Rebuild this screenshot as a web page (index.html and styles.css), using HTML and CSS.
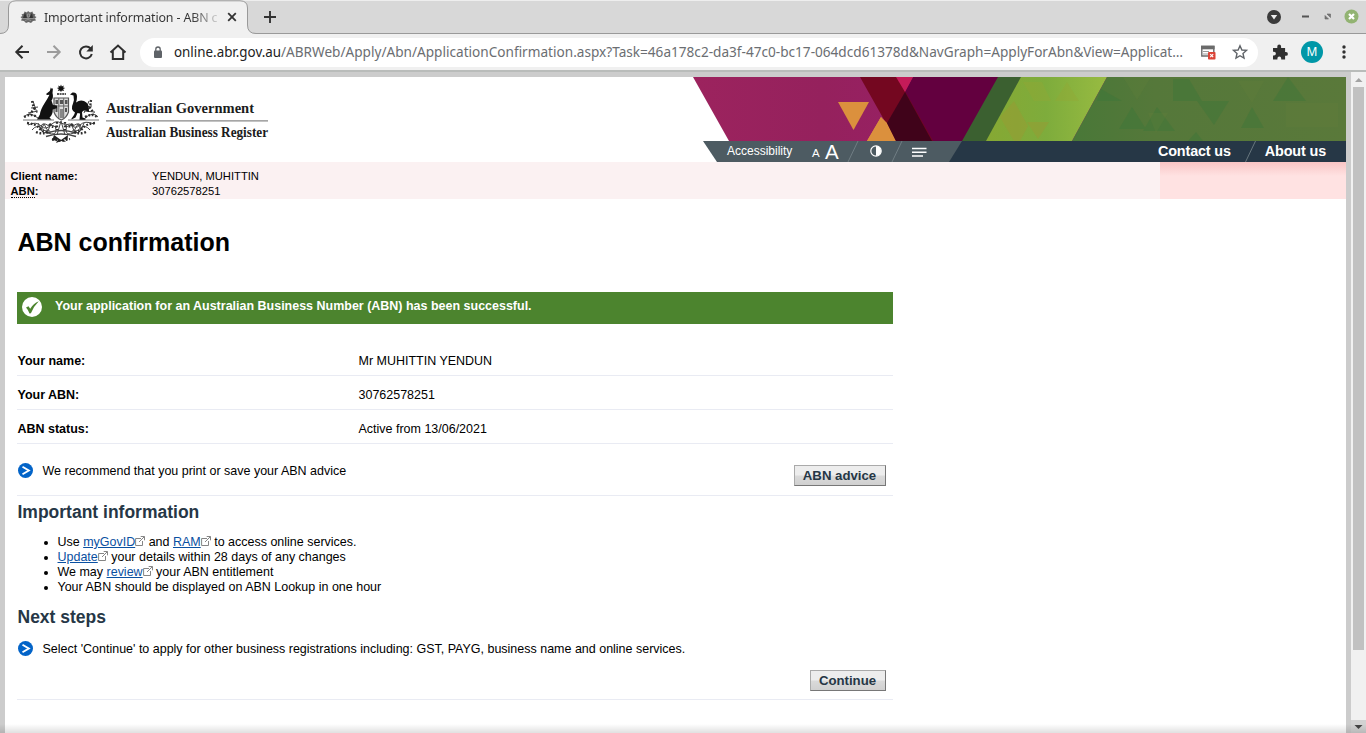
FILE: index.html
```html
<!DOCTYPE html>
<html lang="en">
<head>
<meta charset="utf-8">
<title>Important information - ABN confirmation</title>
<link rel="stylesheet" href="styles.css">
</head>
<body>
<svg width="0" height="0" class="defs">
  <symbol id="ext" viewBox="0 0 10 10"><path d="M6 2.500H.6v7h6.900V5M5.700.5h3.800v3.800M9.300.7L4 6" fill="none" stroke="#858585" stroke-width="1"/></symbol>
  <symbol id="go" viewBox="0 0 16 16"><circle cx="7.500" cy="7.500" r="7.500" fill="#0364c8"/><path d="M4.500 3.800L10.800 7.500l-6.300 3.700" fill="none" stroke="#fff" stroke-width="1.900"/></symbol>
  <symbol id="crest" viewBox="0 0 86 64">
    <g fill="none" stroke="#444" stroke-width="1">
      <path d="M5 38h31M50 38h31" stroke="#777"/>
      <path d="M10 43q8-4 13 1t11-2q4-4 9-1t9 1q5 6 10 1t14-1M14 48q5-6 9-2t8 3M72 48q-5-6-9-2t-8 3M20 41l3 7 3-6 4 7 3-8M66 41l-3 7-3-6-4 7-3-8"/>
      <path d="M31 44q-7-5-8 1t7 6q8 3 8-3t-7-4M55 44q7-5 8 1t-7 6q-8 3-8-3t7-4M43 39l-4 14M43 39l4 14"/>
      <path d="M15 19l4 12M13 26l7-1M10 31l10-2M71 19l-5 12M74 24l-8 1M77 30l-11-1M20 36q-9-7-14-1M67 36q8-7 13-1"/>
      <path d="M29 51q14-5 29 0M28 54.500q15-5 30 0" stroke-width="1.400"/>
    </g>
    <g fill="none" stroke="#2e2e2e" stroke-width="2.300" stroke-dasharray="1.800 1.700">
      <path d="M14 19l2 8-4 5M73 18l-1 8 4 5M6 35q7-4 13 0M67 35q7-4 12 0M9 41q9 1 12 5t9 4M77 41q-9 1-12 5t-9 4M18 50q7 3 14-1M68 50q-7 3-14-1M34 57l9 2 9-2M31 42q5 5 8 2M47 44q5 2 8-2M39 40v8M47 40v8"/>
    </g>
    <path d="M43 2.500l.8 2 2-1-.6 2 2 .6-2 1 .8 2-2.100-.6-.9 1.600-1-1.600-2.200.6 1-2-2-1 2-.6-.6-2 2 1z" fill="#111"/>
    <path d="M39 12h9" stroke="#222" stroke-width="1.300" stroke-dasharray="2 .6"/>
    <path d="M36 16h14.500v14q-2 6-7.200 8-5.300-2-7.300-8z" fill="#ddd" stroke="#555" stroke-width="1.200"/>
    <path d="M36 24h14M40.800 16v20M45.700 16v20" stroke="#666" fill="none"/>
    <path d="M37.500 18h2.500v4h-2.500zM42 18h3v4h-3zM47 18h2.500v4h-2.500zM37.500 26h2v4h-2zM47 26h2v4h-2z" fill="#555"/>
    <path d="M42 27h3v9h-3z" fill="#888"/>
    <path d="M32.800 5.500l-1 3.500-3.800 3 1 1 2.500-.3q-2.500 5-4.800 8.300-4.500 7-4.800 11.500L19 37.500h14.500l-2-2q3.500-3 3.300-8l4.700-1.500-.7-2.500-3.800-.5-1.500-4.500q2.300-3 1-7.500l.5-5-1 1z" fill="#111"/>
    <path d="M52 12.500l2.500-2q4.500-.5 4.500 4 0 3.500-1 6 4-3.200 8-1.500 5.500 2 5 11l-4.500-2-2.500 2 .5 5.500 3 1v1.200h-6l.6-6.200-2.600-.5-2 4.500-4 2v-1l2.500-3.500 1-2.500q-5-3-2-9 1.500-4 .5-8z" fill="#111"/>
    <path d="M36 53l7 5 7-5-.5 5-4.500-1 3 3-5-1-5 2 2-3.500-6 1.500z" fill="#222"/>
  </symbol>
</svg>

<div class="browser">
  <div class="tabstrip">
    <svg class="tabshape" width="260" height="34" viewBox="0 0 260 34"><path d="M0 33.500Q8.500 33.500 8.500 25V8Q8.500.8 16 .8h224q7.500 0 7.500 7.200v17q0 8.500 8 8.500h5v1H0z" fill="#f0f0f0"/><path d="M0 33.500Q8.500 33.500 8.500 25V8Q8.500.8 16 .8h224q7.500 0 7.500 7.200v17q0 8.500 8.500 8.500h4" fill="none" stroke="#999"/></svg>
    <div class="tab">
      <svg width="17" height="13" viewBox="0 0 17 13"><path d="M8 0l2 1.500 2.500-1 .5 2 2.500 1-1 1.500L16.500 6l-1.500 1.500 1 2-3 .5-2 2-2.500-1-2.500 1-2-2-3-.5 1-2L.5 6 2.500 5l-1-1.500L4 2.500l.5-2L7 1.500z" fill="#666"/><path d="M5 1.500L3 7h4zM12 2l1 5H9z" fill="#333"/><path d="M7.500 3h2v3h-2zM2 7.500h13M5 9.500l3-1 3 1" fill="none" stroke="#999" stroke-width=".8"/></svg>
      <span class="tabtitle">Important information - ABN c</span>
      <svg class="close" width="10" height="10" viewBox="0 0 10 10"><path d="M1.200 1.200l7.600 7.600M8.800 1.200L1.200 8.800" stroke="#333" stroke-width="1.800"/></svg>
    </div>
    <svg class="plus" width="12" height="12" viewBox="0 0 12 12"><path d="M6 0v12M0 6h12" stroke="#333" stroke-width="1.900"/></svg>
    <svg class="winctl" width="96" height="16" viewBox="0 0 96 16">
      <circle cx="8" cy="8" r="7" fill="#3b3b3b"/><path d="M4.800 6h6.400L8 10.500z" fill="#eee"/>
      <path d="M36 7.500h7" stroke="#555" stroke-width="2"/>
      <path d="M61 5h3.500v3.500zM59 6.500V10h3.500z" fill="#777" stroke="#666" stroke-width=".6"/>
      <circle cx="85.500" cy="7.500" r="7" fill="#92b372"/><path d="M83 5l5 5M88 5l-5 5" stroke="#fff" stroke-width="2.200"/>
    </svg>
  </div>
  <div class="toolbar">
    <svg class="navicons" width="114" height="20" viewBox="0 0 114 20" fill="none" stroke-width="2">
      <path d="M15 10H2.500M8.500 3.800L2.300 10l6.200 6.200" stroke="#2e2e2e"/>
      <path d="M33 10h12.500M39.500 3.800l6.200 6.200-6.200 6.200" stroke="#9c9c9c"/>
      <path d="M76.600 6.500A6 6 0 1 0 77.800 12" stroke="#2e2e2e"/><path d="M78.800 3v6.500h-6.500z" fill="#2e2e2e"/>
      <path d="M96.500 10.500L104 3.500l7.500 7M98.800 9v8h10.400V9" stroke="#2e2e2e"/>
    </svg>
    <div class="urlbar">
      <svg class="lock" width="10" height="13" viewBox="0 0 10 13"><rect x="1" y="4.500" width="8" height="7.500" rx="1" fill="#5f6368"/><path d="M2.800 5V3.200a2.200 2.200 0 0 1 4.400 0V5" fill="none" stroke="#5f6368" stroke-width="1.300"/></svg>
      <svg class="url" width="1014" height="26"><text x="0" y="18"><tspan class="host" textLength="107" lengthAdjust="spacingAndGlyphs">online.abr.gov.au</tspan><tspan x="107" textLength="902" lengthAdjust="spacingAndGlyphs">/ABRWeb/Apply/Abn/ApplicationConfirmation.aspx?Task=46a178c2-da3f-47c0-bc17-064dcd61378d&amp;NavGraph=ApplyForAbn&amp;View=Applicat…</tspan></text></svg>
      <svg class="urlicons" width="50" height="18" viewBox="0 0 50 18">
        <path d="M1.800 3.500h12v9.500h-12z" fill="none" stroke="#6b6b6b" stroke-width="1.400"/><path d="M1 2.700h13.600v3.600H1z" fill="#6b6b6b"/><path d="M3 8.500h6M3 11h5" stroke="#999"/>
        <rect x="8" y="9" width="7.500" height="7.500" rx=".8" fill="#db4437"/><path d="M10.200 11.200l3 3M13.200 11.200l-3 3" stroke="#fff" stroke-width="1.200"/>
        <path d="M40 2.700l1.900 4.300 4.600.4-3.500 3.100 1 4.600-4-2.400-4 2.400 1-4.600-3.500-3.100 4.600-.4z" fill="none" stroke="#5f6368" stroke-width="1.400"/>
      </svg>
    </div>
    <svg class="puzzle" width="16" height="16" viewBox="0 0 16 16"><path d="M1 4h4.300V2.500a1.900 1.900 0 0 1 3.800 0V4h4v4H14a1.900 1.900 0 0 1 0 3.800h-.9V15.500H9.200v-1a1.900 1.900 0 0 0-3.800 0v1H1v-4h1a1.900 1.900 0 0 0 0-3.800H1z" fill="#303030"/></svg>
    <span class="avatar">M</span>
    <svg class="dots" width="4" height="16" viewBox="0 0 4 16" fill="#303030"><circle cx="2" cy="3" r="1.700"/><circle cx="2" cy="8" r="1.700"/><circle cx="2" cy="13" r="1.700"/></svg>
  </div>
</div>

<div class="viewport">
  <div class="page">
    <header class="head">
      <div class="brand">
        <svg width="270" height="85" viewBox="0 0 270 85">
          <use href="#crest" x="13" y="5" width="86" height="64"/>
          <text x="101" y="36" textLength="148" lengthAdjust="spacingAndGlyphs">Australian Government</text>
          <path d="M101 43.800h162" stroke="#888" stroke-width="1.300"/>
          <text x="101" y="60" textLength="162" lengthAdjust="spacingAndGlyphs">Australian Business Register</text>
        </svg>
      </div>
      <div class="banner">
        <svg class="art" width="654" height="64" viewBox="-1 0 654 64">
          <defs>
            <linearGradient id="mag"><stop offset="0" stop-color="#9c235e"/><stop offset=".2" stop-color="#95215d"/><stop offset=".35" stop-color="#982065"/></linearGradient>
            <linearGradient id="lime"><stop offset="0" stop-color="#86a833"/><stop offset=".5" stop-color="#7eac3c"/><stop offset="1" stop-color="#98bb41"/></linearGradient>
            <linearGradient id="grn"><stop offset="0" stop-color="#497838"/><stop offset=".3" stop-color="#55783a"/><stop offset="1" stop-color="#5a793a"/></linearGradient>
          </defs>
          <path d="M0 0h654v64H36z" fill="url(#mag)"/>
          <path d="M220 0h95l-36 64h-95z" fill="#63003f"/>
          <path d="M174 64l14-24 14 24z" fill="#db903d"/>
          <path d="M167 0h37l36 64h-37z" fill="#740720"/>
          <path d="M188 40l6 6 9 18h-29z" fill="#db903d"/>
          <path d="M203 0h17l-8 15z" fill="#c41b59"/>
          <path d="M212 15l27 49h-36l-9-18z" fill="#40031a"/>
          <path d="M145 25h31l-15.500 28z" fill="#db903d"/>
          <path d="M305 0h26l-36 64h-26z" fill="#3b6030"/>
          <path d="M328 0h86l-35 64h-86z" fill="url(#lime)"/>
          <path d="M321 24l14 25-8 15h-6l-14-24zM334 45h22l-11 17z" fill="#9b9932" opacity=".45"/>
          <path d="M330 5h19l9 19h-17zM374 5l12 19h-24z" fill="#95a735" opacity=".35"/>
          <path d="M414 0h240v64H379z" fill="url(#grn)"/>
          <path d="M439 30l14 22h-27zM464 30l18 24h-32zM504 24h32l-15 24zM595 0l18 24h-33zM480 2h16l13 22h-29zM408 12l21 12h-25zM559 30l12 21h-23zM503 55l7 9h-15z" fill="#397639" opacity=".4"/>
          <path d="M430 0h28l-14 23zM545 4h26l-12 22zM593 26h52v24h-52zM455 36h20l-12 20z" fill="#6b803e" opacity=".2"/>
        </svg>
        <nav class="nav">
          <svg class="navbg" width="643" height="21" viewBox="0 0 643 21"><path d="M0 0h643v21H14z" fill="#4d5b62"/><path d="M259 0h385v21H246z" fill="#263746"/><path d="M155 0l-10 21M199 0l-10 21M552.500 0l-10 21" stroke="#79868c" stroke-width=".8"/></svg>
          <span class="access">Accessibility</span>
          <span class="small-a">A</span><span class="big-a">A</span>
          <svg class="contrast" width="12" height="12" viewBox="0 0 12 12"><circle cx="6" cy="6" r="5.200" fill="none" stroke="#fff" stroke-width="1.200"/><path d="M6 1a5 5 0 0 1 0 10z" fill="#fff"/></svg>
          <svg class="lines" width="15" height="10" viewBox="0 0 15 10"><path d="M0 1.500h14.500M0 5.200h14.500M0 9h11" stroke="#fff" stroke-width="1.500"/></svg>
          <span class="contact">Contact us</span><span class="about">About us</span>
        </nav>
      </div>
    </header>

    <section class="client">
      <dl><dt>Client name:</dt><dd>YENDUN, MUHITTIN</dd><dt><abbr>ABN</abbr>:</dt><dd>30762578251</dd></dl>
      <div class="pink"></div>
    </section>

    <main class="main">
      <h1>ABN confirmation</h1>
      <div class="success">
        <svg width="20" height="20" viewBox="0 0 20 20"><circle cx="10" cy="10" r="10" fill="#fff"/><path d="M4 10.500l2.500-1.300 1.700 2.600Q11.300 6.500 16.800 4.300 11.500 9.500 8.900 16.300l-1.400.2Q6.400 13 4 10.500z" fill="#4c842e"/></svg>
        <b>Your application for an Australian Business Number (ABN) has been successful.</b>
      </div>
      <dl class="details">
        <div><dt>Your name:</dt><dd>Mr MUHITTIN YENDUN</dd></div>
        <div><dt>Your ABN:</dt><dd>30762578251</dd></div>
        <div><dt>ABN status:</dt><dd>Active from 13/06/2021</dd></div>
      </dl>
      <div class="advice">
        <p class="action"><svg width="16" height="16"><use href="#go"/></svg><span>We recommend that you print or save your ABN advice</span></p>
        <button class="btn w92">ABN advice</button>
      </div>
      <h2>Important information</h2>
      <ul>
        <li>Use <a>myGovID</a><svg class="ext" width="10" height="10"><use href="#ext"/></svg> and <a>RAM</a><svg class="ext" width="10" height="10"><use href="#ext"/></svg> to access online services.</li>
        <li><a>Update</a><svg class="ext" width="10" height="10"><use href="#ext"/></svg> your details within 28 days of any changes</li>
        <li>We may <a>review</a><svg class="ext" width="10" height="10"><use href="#ext"/></svg> your ABN entitlement</li>
        <li>Your ABN should be displayed on ABN Lookup in one hour</li>
      </ul>
      <h2 class="next">Next steps</h2>
      <div class="steps">
        <p class="action"><svg width="16" height="16"><use href="#go"/></svg><span>Select 'Continue' to apply for other business registrations including: GST, PAYG, business name and online services.</span></p>
        <button class="btn w76">Continue</button>
      </div>
    </main>
  </div>
  <div class="scroll">
    <svg width="15" height="15" viewBox="0 0 15 15"><path d="M4 10h7.500L7.750 6z" fill="#a3a3a3"/></svg>
    <div class="thumb"></div>
    <div class="down"><svg width="15" height="13" viewBox="0 0 15 13"><path d="M3.500 5h8L7.500 9z" fill="#444"/></svg></div>
  </div>
</div>
<div class="shade"></div>
</body>
</html>
```

FILE: styles.css
```css
* { box-sizing: border-box; }
html, body { margin: 0; height: 733px; overflow: hidden; }
body { font: 12.490px/15px "Liberation Sans", Arial, sans-serif; color: #000; background: #ccc; }
h1, h2, p, dl, dd, ul { margin: 0; padding: 0; }
svg { display: block; flex: none; }
.defs { position: absolute; }

/* Browser frame */
.browser { height: 72px; background: #f0f0f0; border-bottom: 2px solid #b9bcba; font-family: "Noto Sans", sans-serif; }
.tabstrip { position: relative; height: 34px; background: #d8d8d8; border-top: 1px solid #eee; border-bottom: 1px solid #999; display: flex; align-items: center; }
.tabshape { position: absolute; left: 0; top: -1px; }
.tab { position: relative; width: 248px; padding-left: 20px; display: flex; align-items: center; }
.tabtitle { width: 176px; margin-left: 7px; white-space: nowrap; font-size: 12.4px; line-height: 20px; letter-spacing: -.12px; padding-top: 1px; color: transparent; background: linear-gradient(90deg, #333 148px, rgba(51, 51, 51, .15) 174px); -webkit-background-clip: text; background-clip: text; }
.close { margin-left: 7px; }
.plus { position: relative; margin-left: 16px; }
.winctl { margin-left: auto; margin-right: 4px; }
.toolbar { height: 36px; display: flex; align-items: center; }
.navicons { margin-left: 14px; }
.urlbar { width: 1118px; height: 29px; margin-left: 12px; padding-left: 13px; border-radius: 15px; background: #fff; display: flex; align-items: center; }
.url { margin-left: 11px; overflow: visible; }
.url text { font: 14px "Noto Sans", sans-serif; fill: #6b6e72; }
.url .host { fill: #222; }
.urlicons { margin-left: 12px; }
.puzzle { margin-left: 14px; }
.avatar { width: 22px; height: 22px; margin-left: 13px; border-radius: 50%; background: #0097a7; color: #fff; font-size: 12px; line-height: 22px; text-align: center; }
.dots { margin-left: 19px; }

/* Web page area */
.viewport { height: 661px; display: flex; justify-content: space-between; background: #ccc; }
.page { width: 1341px; height: 656px; margin: 5px 0 0 5px; background: #fff; }
.scroll { width: 15px; background: #f1f1f1; display: flex; flex-direction: column; }
.thumb { width: 11px; height: 563px; margin: 0 2px; background: #c1c1c1; }
.down { margin-top: auto; height: 13px; background: #d2d2d2; }
.shade { position: absolute; left: 0; right: 0; bottom: 0; height: 9px; background: linear-gradient(transparent, rgba(0, 0, 0, .12)); }

.head { height: 85px; display: flex; justify-content: space-between; }
.brand svg { overflow: visible; }
.brand text { font: bold 15px "Liberation Serif", serif; fill: #1c1c1c; }
.banner { width: 654px; }
.nav { position: relative; width: 643px; height: 21px; margin-left: 11px; display: flex; align-items: center; color: #fff; }
.navbg { position: absolute; left: 0; top: 0; }
.nav > :not(.navbg) { position: relative; }
.access { margin-left: 24px; font-size: 12px; width: 66px; }
.small-a { margin-left: 19px; font-size: 11.500px; width: 8px; padding-top: 4px; }
.big-a { margin-left: 5px; font-size: 20.500px; width: 14px; }
.contrast { margin-left: 31px; margin-top: -1px; }
.lines { margin-left: 30px; }
.contact, .about { font-size: 14.4px; letter-spacing: -.15px; font-weight: bold; white-space: nowrap; }
.contact { margin-left: auto; }
.about { margin: 0 20px 0 34px; }

.client { height: 37px; background: #fbf1f2; display: flex; justify-content: space-between; font-size: 11.200px; }
.client dl { display: grid; grid-template-columns: 141.500px 200px; padding: 7px 0 0 5.500px; }
.client dt { font-weight: bold; }
abbr { border-bottom: 1px dotted #000; }
.pink { width: 186px; background: linear-gradient(#f9c5c5, #ffe2e2 14px); }

.main { width: 888px; padding-left: 12px; }
h1 { height: 93px; padding: 28px 0 0 .5px; font-size: 25px; line-height: 30px; }
.success { height: 32px; background: #4c842e; color: #fff; display: flex; padding-left: 5px; }
.success svg { margin-top: 5px; }
.success b { margin: 7px 0 0 13px; }
.details { padding-top: 18px; }
.details div { display: grid; grid-template-columns: 341px 1fr; height: 34px; padding-top: 12px; border-bottom: 1px solid #e9ebf3; }
.details dt { font-weight: bold; }
.details dt, .details dd { padding-left: .5px; }
.advice { height: 52px; border-bottom: 1px solid #e9ebf3; display: flex; justify-content: space-between; padding: 19px 7px 0 0; }
.action { display: flex; height: 16px; gap: 8.500px; padding-left: 1px; white-space: nowrap; }
.action span { padding-top: 1px; }
.advice .btn { margin-top: 2px; }
.btn { height: 21px; padding: 0 1px 0 0; font: bold 13.200px/17px "Liberation Sans", sans-serif; color: #263746; border: 1px solid; border-color: #aaa #777 #777 #aaa; border-radius: 0; background: linear-gradient(#ededed 0 48%, #dadada 52%, #d0d0d0); }
.w92 { width: 92px; }
.w76 { width: 76px; }
h2 { font-size: 17.5px; line-height: 20px; color: #263746; margin-top: 6px; padding-left: .5px; }
ul { margin-top: 13px; padding-left: 40.500px; }
a { color: #0a50a1; text-decoration: underline; }
.ext { display: inline-block; }
.next { margin-top: 12px; }
.steps { height: 73px; border-bottom: 1px solid #e9ebf3; padding: 14px 7px 0 0; }
.steps .btn { display: block; margin: 13px 0 0 auto; }
```
